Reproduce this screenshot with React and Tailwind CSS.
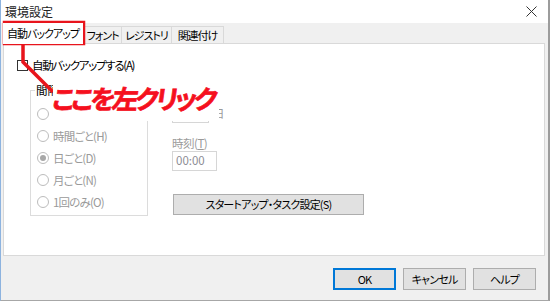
import React from "react";

const font = "font-['Noto_Sans_CJK_JP','Noto_Sans',sans-serif]";

const Radio = ({ label, checked }) => (
  <div className="flex items-center h-[22px] gap-[4px]">
    <span className="w-[12px] h-[12px] rounded-full border border-[#bcbcbc] bg-white flex items-center justify-center">
      {checked && <span className="w-[6px] h-[6px] rounded-full bg-[#a8a8a8]" />}
    </span>
    <span className="text-[11.5px] text-[#9a9a9a] tracking-[-0.8px]">{label}</span>
  </div>
);

const DialogButton = ({ children, primary }) => (
  <button
    className={
      "w-[63px] h-[22px] text-[11px] text-black bg-[#e1e1e1] flex items-center justify-center tracking-[-0.8px] " +
      (primary ? "border-2 border-[#0078d7]" : "border border-[#adadad]")
    }
  >
    {children}
  </button>
);

export default function App() {
  return (
    <div className={`${font} [font-feature-settings:'palt'] relative w-[550px] h-[301px] overflow-hidden bg-[#f0f0f0] flex flex-col border-l border-l-[#8db3df] border-r-2 border-r-[#9c9c9c] border-b border-b-[#a7a7a7]`}>
      {/* Title bar */}
      <div className="h-[23px] bg-white flex items-center justify-between pl-[4px] pr-[11px] shrink-0">
        <span className="text-[12px] text-[#222]">環境設定</span>
        <svg width="11" height="11" viewBox="0 0 11 11">
          <path d="M0.5 0.5 L10.5 10.5 M10.5 0.5 L0.5 10.5" stroke="#333" strokeWidth="1" />
        </svg>
      </div>

      {/* Tabs */}
      <div className="h-[20px] flex items-end pl-[2px] shrink-0 text-[11px] tracking-[-1px]">
        <div className="w-[80px] h-[21px] bg-white flex items-center justify-center text-black -mb-px z-10">
          自動バックアップ
        </div>
        <div className="w-[39px] h-[17px] border border-b-0 border-[#d9d9d9] flex items-center justify-center text-black">
          フォント
        </div>
        <div className="w-[50px] h-[17px] border border-b-0 border-l-0 border-[#d9d9d9] flex items-center justify-center text-black">
          レジストリ
        </div>
        <div className="w-[52px] h-[17px] border border-b-0 border-l-0 border-[#d9d9d9] flex items-center justify-center text-black">
          関連付け
        </div>
      </div>

      {/* Panel */}
      <div className="h-[213px] ml-[2px] mr-[3px] bg-white border border-[#d9d9d9] shrink-0 pl-[13px] pt-[15px]">
        <div className="flex items-center gap-[4px] h-[13px]">
          <span className="w-[11px] h-[11px] border border-[#333] bg-white" />
          <span className="text-[11.5px] text-black tracking-[-1.3px]">自動バックアップする(A)</span>
        </div>

        <div className="flex mt-[17px] ml-[13px]">
          <fieldset className="w-[118px] h-[134px] border border-[#dcdcdc] px-[6px] pt-[4px] -mt-[7px]">
            <legend className="text-[11.5px] text-black px-[1px] ml-[-2px]">間隔</legend>
            <Radio label="分ごと(M)" />
            <Radio label="時間ごと(H)" />
            <Radio label="日ごと(D)" checked />
            <Radio label="月ごと(N)" />
            <Radio label="1回のみ(O)" />
          </fieldset>

          <div className="ml-[24px] flex flex-col">
            <div className="flex items-center mt-[15px]">
              <div className="w-[37px] h-[19px] border border-[#d6d6d6]" />
              <span className="ml-[4px] text-[11.5px] text-[#9a9a9a]">日</span>
            </div>
            <span className="mt-[13px] text-[11.5px] text-[#9a9a9a] leading-[15px] tracking-[-0.5px]">
              時刻(<span className="underline">T</span>)
            </span>
            <div className="w-[45px] h-[20px] border border-[#d6d6d6] flex items-center pl-[3px] text-[11.5px] text-[#8c8c94]">
              00:00
            </div>
            <button className="mt-[23px] ml-[1px] w-[191px] h-[21px] bg-[#e1e1e1] border border-[#adadad] text-[11px] text-black flex items-center justify-center tracking-[-0.8px]">
              スタートアップ・タスク設定(S)
            </button>
          </div>
        </div>
      </div>

      {/* Bottom buttons */}
      <div className="flex-1 flex justify-end items-start pt-[12px] pr-[12px] gap-[7px]">
        <DialogButton primary>OK</DialogButton>
        <DialogButton>キャンセル</DialogButton>
        <DialogButton>ヘルプ</DialogButton>
      </div>

      {/* Window edge highlight */}
      <div className="absolute right-[-2px] top-0 w-[2px] h-[22px] bg-[#4a90e2]" />

      {/* Annotation: red box around tab and pointer line */}
      <svg className="absolute left-0 top-0 pointer-events-none" width="550" height="301">
        <rect x="3.5" y="22.5" width="79" height="21" fill="none" stroke="#e8141c" strokeWidth="3.5" />
        <polyline points="22,45 22,62 52,92" fill="none" stroke="#e8141c" strokeWidth="3.5" />
      </svg>

      {/* Annotation: label */}
      <div className="absolute left-[52px] top-[84px] w-[166px] h-[37px] bg-white flex items-start pt-[1px]">
        <span className="text-[26px] font-bold text-[#f5101e] tracking-[-3px] skew-x-[-8deg] leading-none inline-block [-webkit-text-stroke:0.7px_#f5101e]">
          ここを左クリック
        </span>
      </div>
    </div>
  );
}
